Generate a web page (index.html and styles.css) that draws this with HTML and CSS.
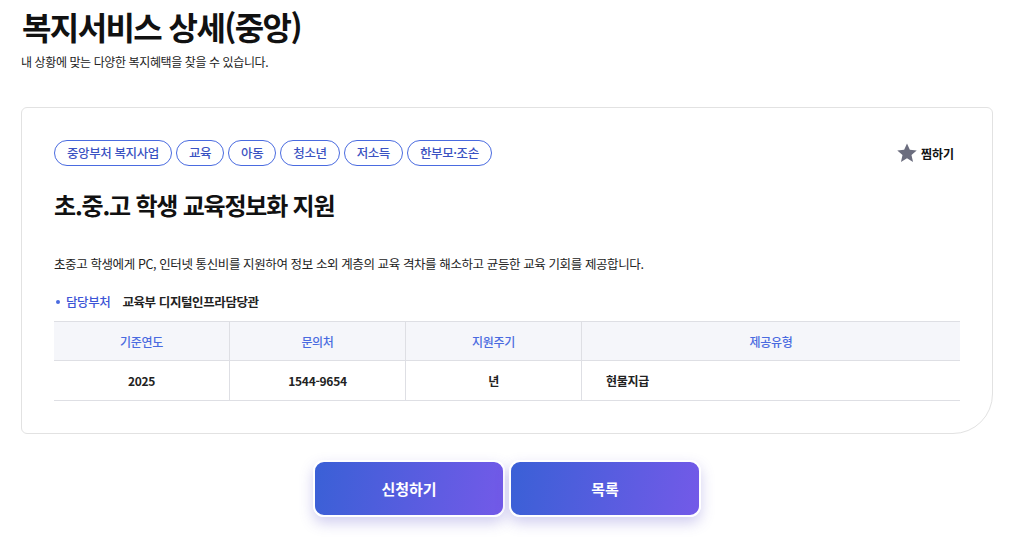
FILE: index.html
```html
<!DOCTYPE html>
<html lang="ko">
<head>
  <meta charset="UTF-8">
  <meta name="viewport" content="width=device-width, initial-scale=1.0">
  <title>복지서비스 상세(중앙)</title>
  <link rel="stylesheet" href="styles.css">
</head>
<body>
  <header class="page-head">
    <h1 class="page-title">복지서비스 상세(중앙)</h1>
    <p class="page-desc">내 상황에 맞는 다양한 복지혜택을 찾을 수 있습니다.</p>
  </header>

  <section class="card">
    <div class="card-top">
      <div class="tags">
        <span class="tag">중앙부처 복지사업</span>
        <span class="tag">교육</span>
        <span class="tag">아동</span>
        <span class="tag">청소년</span>
        <span class="tag">저소득</span>
        <span class="tag">한부모·조손</span>
      </div>
      <button class="fav">
        <svg width="22" height="22" viewBox="0 0 24 24"><path fill="#6b6d7e" d="M12 1.5l3.1 7 7.5.7-5.7 5 1.7 7.5L12 17.8l-6.6 3.9 1.7-7.5-5.7-5 7.5-.7z"/></svg>
        찜하기
      </button>
    </div>

    <h2 class="svc-title">초.중.고 학생 교육정보화 지원</h2>
    <p class="svc-desc">초중고 학생에게 PC, 인터넷 통신비를 지원하여 정보 소외 계층의 교육 격차를 해소하고 균등한 교육 기회를 제공합니다.</p>

    <div class="dept">
      <span class="dept-label">담당부처</span>
      <span class="dept-value">교육부 디지털인프라담당관</span>
    </div>

    <table class="info">
      <tr><th>기준연도</th><th>문의처</th><th>지원주기</th><th>제공유형</th></tr>
      <tr><td>2025</td><td>1544-9654</td><td>년</td><td class="left">현물지급</td></tr>
    </table>
  </section>

  <div class="actions">
    <button class="btn-main">신청하기</button>
    <button class="btn-main">목록</button>
  </div>
</body>
</html>
```

FILE: styles.css
```css
body {
  margin: 0;
  padding: 0 21px 30px;
  font-family: "Noto Sans CJK KR", "Noto Sans", sans-serif;
  color: #111;
  background: #fff;
}
.page-head {
  padding-top: 3px;
}
.page-title {
  margin: 0;
  font-size: 32px;
  font-weight: 700;
  letter-spacing: -1.6px;
  line-height: 46px;
  padding-left: 1px;
}
.page-desc {
  margin: 4px 0 0;
  font-size: 12px;
  letter-spacing: -0.4px;
  color: #222;
}
.card {
  margin-top: 37px;
  border: 1px solid #e2e2e2;
  border-radius: 6px 6px 40px 6px;
  padding: 32px 32px 32px 32px;
}
.card-top {
  display: flex;
  justify-content: space-between;
  align-items: center;
}
.tags {
  display: flex;
  gap: 4px;
}
.tag {
  display: inline-block;
  height: 24px;
  line-height: 24px;
  padding: 0 12px;
  border: 1px solid #4a6be0;
  border-radius: 14px;
  font-size: 12.5px;
  font-weight: 500;
  letter-spacing: -0.4px;
  color: #3a52c2;
}
.fav {
  display: flex;
  align-items: center;
  gap: 3px;
  border: none;
  background: none;
  padding: 0 6px 0 0;
  font-family: inherit;
  font-size: 12px;
  font-weight: 700;
  color: #111;
  cursor: pointer;
}
.svc-title {
  margin: 22px 0 0;
  font-size: 24px;
  line-height: 34px;
  font-weight: 700;
  letter-spacing: -1.2px;
}
.svc-desc {
  margin: 33px 0 0;
  font-size: 12.5px;
  line-height: 18px;
  letter-spacing: -0.4px;
  color: #222;
}
.dept {
  margin-top: 20px;
  font-size: 12.5px;
  line-height: 18px;
  letter-spacing: -0.4px;
  display: flex;
  align-items: center;
}
.dept-label {
  color: #3c55d6;
  font-weight: 500;
  padding-left: 12px;
  position: relative;
  margin-right: 12px;
}
.dept-label::before {
  content: "";
  position: absolute;
  left: 2px;
  top: 50%;
  width: 4px;
  height: 4px;
  margin-top: -2px;
  border-radius: 50%;
  background: #4a6be0;
}
.dept-value {
  font-weight: 700;
  color: #222;
}
.info {
  width: 100%;
  margin-top: 10px;
  border-collapse: collapse;
  font-size: 12px;
  letter-spacing: -0.3px;
}
.info th, .info td {
  border-top: 1px solid #dedfe4;
  border-bottom: 1px solid #dedfe4;
  border-left: 1px solid #dedfe4;
  text-align: center;
  height: 38px;
  padding: 0;
}
.info td {
  height: 39px;
}
.info th:first-child, .info td:first-child {
  border-left: none;
}
.info th {
  background: #f5f6fa;
  color: #4a6be0;
  font-weight: 500;
  width: 175px;
}
.info th:last-child {
  width: auto;
}
.info td {
  font-weight: 700;
  color: #222;
}
.info td.left {
  text-align: left;
  padding-left: 24px;
}
.actions {
  display: flex;
  justify-content: center;
  gap: 4px;
  margin-top: 26px;
}
.btn-main {
  width: 192px;
  height: 57px;
  border: 2px solid #fff;
  border-radius: 11px;
  background: linear-gradient(100deg, #3a60d6, #735ae8);
  box-shadow: 0 6px 14px rgba(90, 80, 200, 0.28);
  color: #fff;
  font-family: inherit;
  font-size: 15px;
  font-weight: 700;
  cursor: pointer;
}
```
